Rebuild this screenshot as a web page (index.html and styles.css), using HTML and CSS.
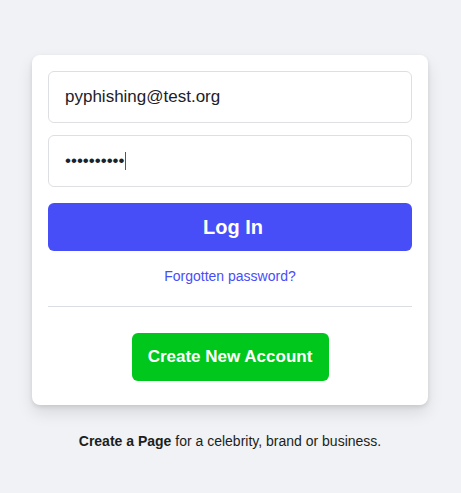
FILE: index.html
```html
<!DOCTYPE html>
<html lang="en">
<head>
<meta charset="utf-8">
<title>Log In</title>
<link rel="stylesheet" href="styles.css">
</head>
<body>
<main class="page">
  <form class="card">
    <input class="field" type="text" value="pyphishing@test.org" aria-label="Email">
    <div class="field field-pass" aria-label="Password"><span class="dots">••••••••••</span><span class="caret"></span></div>
    <button class="btn-login" type="button">Log In</button>
    <a class="forgot" href="#">Forgotten password?</a>
    <hr class="divider">
    <div class="create-row">
      <button class="btn-create" type="button">Create New Account</button>
    </div>
  </form>
  <p class="footer"><strong>Create a Page</strong> for a celebrity, brand or business.</p>
</main>
</body>
</html>
```

FILE: styles.css
```css
* { box-sizing: border-box; }
html, body { margin: 0; padding: 0; }
body {
  background: #f0f2f5;
  font-family: "Liberation Sans", Arial, sans-serif;
  color: #1c1e21;
}
.page {
  padding: 55px 33px 0 32px;
  width: 461px;
}
.card {
  width: 396px;
  background: #fff;
  border-radius: 8px;
  box-shadow: 0 2px 4px rgba(0,0,0,0.1), 0 8px 16px rgba(0,0,0,0.1);
  padding: 16px 16px 24px;
  display: flex;
  flex-direction: column;
}
.field {
  display: flex;
  align-items: center;
  width: 364px;
  height: 52px;
  border: 1px solid #dddfe2;
  border-radius: 6px;
  padding: 0 16px;
  font-family: inherit;
  font-size: 17px;
  color: #1d2129;
  background: #fff;
  outline: none;
  margin: 0 0 12px;
}
.field-pass { margin-bottom: 16px; }
.dots { letter-spacing: 0; font-size: 17px; line-height: 18px; }
.caret {
  display: inline-block;
  width: 1px;
  height: 18px;
  background: #3b44f6;
  margin-left: 0;
}
.btn-login {
  width: 364px;
  height: 48px;
  border: none;
  border-radius: 6px;
  background: #474ef8;
  color: #fff;
  font-family: inherit;
  font-size: 20px;
  font-weight: bold;
  padding: 0 0 0 6px;
}
.forgot {
  display: block;
  text-align: center;
  color: #474ef8;
  font-size: 14px;
  text-decoration: none;
  margin-top: 16px;
  line-height: 18px;
}
.divider {
  border: none;
  border-top: 1px solid #dadde1;
  margin: 21px 0 26px;
  width: 364px;
}
.create-row {
  display: flex;
  justify-content: center;
}
.btn-create {
  width: 197px;
  height: 48px;
  border: none;
  border-radius: 6px;
  background: #00c71b;
  color: #fff;
  font-family: inherit;
  font-size: 17px;
  font-weight: bold;
  padding: 0;
}
.footer {
  margin: 28px 0 0;
  text-align: center;
  font-size: 14px;
  width: 396px;
  color: #1c1e21;
}
```
